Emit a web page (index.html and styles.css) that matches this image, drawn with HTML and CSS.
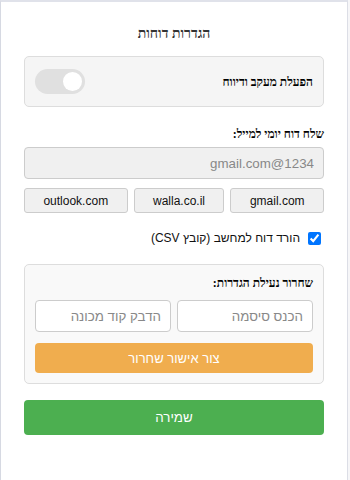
FILE: index.html
```html
<!DOCTYPE html>
<html lang="he">
<head>
<meta charset="utf-8">
<link rel="stylesheet" href="styles.css">
</head>
<body>
<div class="popup" dir="rtl">
  <div class="title">הגדרות דוחות</div>
  <div class="card card-toggle">
    <span class="label">הפעלת מעקב ודיווח</span>
    <span class="toggle"><span class="knob"></span></span>
  </div>
  <div class="section-label">שלח דוח יומי למייל:</div>
  <input class="email" type="text" placeholder="1234@gmail.com">
  <div class="domains">
    <button class="dom">gmail.com</button>
    <button class="dom">walla.co.il</button>
    <button class="dom">outlook.com</button>
  </div>
  <label class="check-row">
    <input type="checkbox" checked>
    <span>הורד דוח למחשב (קובץ CSV)</span>
  </label>
  <div class="card card-unlock">
    <div class="label">שחרור נעילת הגדרות:</div>
    <div class="unlock-inputs">
      <input class="field" type="text" placeholder="הכנס סיסמה">
      <input class="field" type="text" placeholder="הדבק קוד מכונה">
    </div>
    <button class="btn-orange">צור אישור שחרור</button>
  </div>
  <button class="btn-save">שמירה</button>
</div>
</body>
</html>
```

FILE: styles.css
```css
html, body {
  margin: 0;
  padding: 0;
  height: 100%;
}
body {
  background: #f6f6f8;
  font-family: "Liberation Sans", Arial, sans-serif;
  color: #222;
}
.popup {
  box-sizing: border-box;
  width: 348px;
  height: 480px;
  background: #fff;
  border-top: 2px solid #e0e2ea;
  border-left: 1px solid #d6d9e2;
  border-right: 1px solid #dcdee6;
  padding: 22px 23px 0 23px;
  display: flex;
  flex-direction: column;
}
.title {
  font-family: "Liberation Serif", serif;
  font-size: 14px;
  font-weight: bold;
  color: #333;
  text-align: center;
  line-height: 20px;
}
.card {
  border: 1px solid #ddd;
  border-radius: 5px;
}
.card-toggle {
  margin-top: 12px;
  background: #f5f5f5;
  padding: 12px 10px;
  display: flex;
  align-items: center;
  justify-content: space-between;
}
.label, .section-label {
  font-family: "Liberation Serif", serif;
  font-weight: bold;
  font-size: 12px;
  color: #000;
  line-height: 16px;
}
.toggle {
  position: relative;
  width: 50px;
  height: 25px;
  border-radius: 13px;
  background: #e0e0e0;
  display: block;
}
.knob {
  position: absolute;
  top: 3px;
  right: 3px;
  width: 19px;
  height: 19px;
  border-radius: 50%;
  background: #fff;
}
.section-label {
  margin-top: 19px;
}
.email {
  box-sizing: border-box;
  margin-top: 5px;
  height: 32px;
  width: 100%;
  background: #f0f0f0;
  border: 1px solid #ccc;
  border-radius: 4px;
  padding: 0 9px;
  font-family: "Liberation Sans", Arial, sans-serif;
  font-size: 13.33px;
  direction: rtl;
  outline: none;
}
.email::placeholder, .field::placeholder {
  color: #888;
}
.domains {
  margin-top: 9px;
  display: flex;
  gap: 6px;
}
.dom {
  flex: 1 1 auto;
  height: 25px;
  padding: 0;
  background: #f0f0f0;
  border: 1px solid #ccc;
  border-radius: 3px;
  font-family: "Liberation Sans", Arial, sans-serif;
  font-size: 12px;
  color: #111;
}
.check-row {
  margin-top: 17px;
  display: flex;
  align-items: center;
  gap: 8px;
  padding-right: 3px;
  font-size: 12px;
  color: #111;
  line-height: 16px;
}
.check-row input {
  margin: 0;
  width: 13px;
  height: 13px;
  accent-color: #0075ff;
}
.card-unlock {
  margin-top: 18px;
  background: #f9f9f9;
  padding: 10px;
}
.unlock-inputs {
  margin-top: 9px;
  display: flex;
  gap: 6px;
}
.field {
  box-sizing: border-box;
  flex: 1 1 0;
  min-width: 0;
  height: 32px;
  background: #fff;
  border: 1px solid #ccc;
  border-radius: 4px;
  padding: 0 9px;
  font-family: "Liberation Sans", Arial, sans-serif;
  font-size: 13.33px;
  outline: none;
}
.btn-orange {
  margin-top: 11px;
  width: 100%;
  height: 30px;
  border: none;
  border-radius: 4px;
  background: #f0ad4e;
  color: #fff;
  font-family: "Liberation Sans", Arial, sans-serif;
  font-size: 13px;
}
.btn-save {
  margin-top: 16px;
  width: 100%;
  height: 35px;
  border: none;
  border-radius: 4px;
  background: #4caf50;
  color: #fff;
  font-family: "Liberation Sans", Arial, sans-serif;
  font-size: 13.33px;
}
```
